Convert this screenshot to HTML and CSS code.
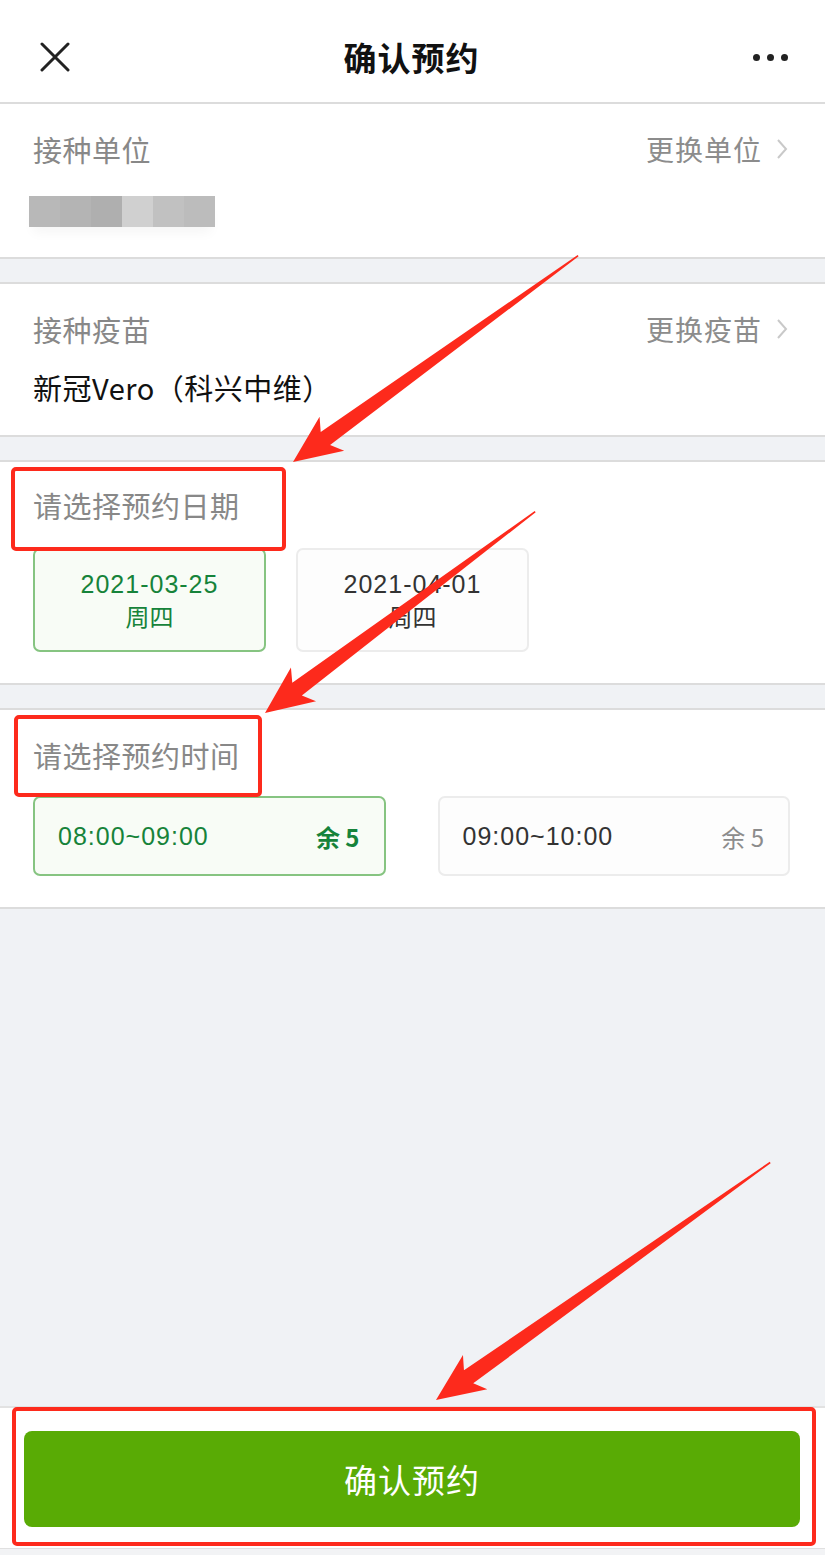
FILE: index.html
```html
<!DOCTYPE html>
<html lang="zh-CN">
<head>
<meta charset="utf-8">
<title>确认预约</title>
<link rel="stylesheet" href="styles.css">
</head>
<body>
<div class="page">
  <header class="nav">
    <svg class="nav-close" viewBox="0 0 30 30" width="30" height="30"><path d="M2 2L28 28M28 2L2 28" stroke="#222" stroke-width="3" stroke-linecap="round" fill="none"/></svg>
    <div class="nav-title">确认预约</div>
    <div class="nav-more"><span></span><span></span><span></span></div>
  </header>

  <section class="card card-unit">
    <div class="row-head">
      <span class="label">接种单位</span>
      <span class="link">更换单位<svg class="chev" viewBox="0 0 12 22" width="12" height="22"><path d="M2 2L10 11L2 20" stroke="#c9c9c9" stroke-width="2" fill="none"/></svg></span>
    </div>
    <div class="mosaic">
      <span class="m1"></span><span class="m2"></span><span class="m3"></span><span class="m4"></span><span class="m5"></span><span class="m6"></span>
    </div>
  </section>

  <div class="gap"></div>

  <section class="card card-vaccine">
    <div class="row-head">
      <span class="label">接种疫苗</span>
      <span class="link">更换疫苗<svg class="chev" viewBox="0 0 12 22" width="12" height="22"><path d="M2 2L10 11L2 20" stroke="#c9c9c9" stroke-width="2" fill="none"/></svg></span>
    </div>
    <div class="value">新冠Vero（科兴中维）</div>
  </section>

  <div class="gap"></div>

  <section class="card card-date">
    <div class="label">请选择预约日期</div>
    <div class="dates">
      <div class="date selected"><div class="num">2021-03-25</div><div class="wd">周四</div></div>
      <div class="date"><div class="num">2021-04-01</div><div class="wd">周四</div></div>
    </div>
  </section>

  <div class="gap"></div>

  <section class="card card-time">
    <div class="label">请选择预约时间</div>
    <div class="times">
      <div class="time selected"><span class="t">08:00~09:00</span><span class="rest">余 5</span></div>
      <div class="time"><span class="t">09:00~10:00</span><span class="rest">余 5</span></div>
    </div>
  </section>

  <div class="filler"></div>

  <footer class="bottom">
    <button class="confirm">确认预约</button>
  </footer>
  <div class="foot-strip"></div>

  <svg class="annot" viewBox="0 0 825 1555" width="825" height="1555">
    <g fill="none" stroke="#fd2a1c" stroke-width="4">
      <rect x="13" y="469" width="271" height="80" rx="3"/>
      <rect x="16" y="717" width="244" height="78" rx="3"/>
      <rect x="14" y="1409" width="800" height="135" rx="3"/>
    </g>
    <g fill="#fd2a1c">
      <g transform="translate(293 462) rotate(144.1)">
        <polygon points="-352,-0.8 -40,-8 -48,-21 0,0 -48,21 -40,8 -352,0.8"/>
      </g>
      <g transform="translate(265 713) rotate(143.3)">
        <polygon points="-337,-0.8 -40,-8 -48,-21 0,0 -48,21 -40,8 -337,0.8"/>
      </g>
      <g transform="translate(436 1400) rotate(144.6)">
        <polygon points="-410,-0.8 -40,-8 -48,-21 0,0 -48,21 -40,8 -410,0.8"/>
      </g>
    </g>
  </svg>
</div>
</body>
</html>
```

FILE: styles.css
```css
* { box-sizing: border-box; }
html, body { margin: 0; padding: 0; }
body {
  font-family: "Noto Sans CJK SC", "Noto Sans", sans-serif;
  background: #f0f2f5;
}
.page {
  position: relative;
  width: 825px;
  height: 1555px;
  display: flex;
  flex-direction: column;
  background: #f0f2f5;
  overflow: hidden;
}
.nav {
  height: 104px;
  background: #fff;
  border-bottom: 2px solid #dcdcdc;
  display: flex;
  align-items: center;
  justify-content: space-between;
  padding: 12px 37px 0 40px;
  flex-shrink: 0;
}
.nav-close { display: block; }
.nav-title {
  font-size: 33px;
  font-weight: 700;
  color: #111;
  margin-left: 0;
  letter-spacing: 1px;
}
.nav-more { display: flex; gap: 7px; }
.nav-more span {
  width: 7px; height: 7px; border-radius: 50%;
  background: #222;
}
.card {
  background: #fff;
  border-top: 2px solid #dcdcdc;
  border-bottom: 2px solid #dcdcdc;
  padding: 25px 35px 27px 33px;
  flex-shrink: 0;
}
.nav + .card { border-top: none; }
.card-unit { padding-top: 25px; padding-bottom: 28px; }
.card-vaccine { padding-top: 25px; padding-bottom: 28px; }
.gap { height: 23px; flex-shrink: 0; }
.row-head {
  display: flex;
  justify-content: space-between;
  align-items: center;
  height: 40px;
}
.label {
  font-size: 29px;
  line-height: 40px;
  color: #888;
  letter-spacing: 0.5px;
}
.link {
  font-size: 28px;
  color: #8c8c8c;
  display: flex;
  align-items: center;
  gap: 14px;
  letter-spacing: 1px;
}
.chev { margin-right: 2px; }
.mosaic {
  display: flex;
  margin: 27px 0 2px -4px;
  height: 31px;
  width: 186px;
  box-shadow: 0 10px 12px -4px rgba(0,0,0,0.04);
}
.mosaic span { flex: 1; }
.m1 { background: #b8b8b8; }
.m2 { background: #b4b4b4; }
.m3 { background: #afafaf; }
.m4 { background: #d0d0d0; }
.m5 { background: #c1c1c1; }
.m6 { background: #bcbcbc; }
.value {
  margin-top: 18px;
  font-size: 29px;
  line-height: 40px;
  color: #111;
  letter-spacing: 0.5px;
}
.card-date { padding-bottom: 31px; padding-top: 23px; }
.dates {
  display: flex;
  gap: 30px;
  margin-top: 23px;
}
.date {
  width: 233px;
  height: 104px;
  border: 2px solid #ececec;
  border-radius: 7px;
  background: #fdfdfd;
  display: flex;
  flex-direction: column;
  align-items: center;
  justify-content: center;
  color: #333;
}
.date .num {
  font-family: "Liberation Sans", "Noto Sans CJK SC", sans-serif;
  font-size: 25px;
  line-height: 32px;
  letter-spacing: 1px;
}
.date .wd {
  font-size: 24px;
  line-height: 32px;
}
.date.selected {
  border-color: #86c481;
  background: #f8fcf6;
  color: #16833a;
}
.card-time { padding-bottom: 31px; padding-top: 25px; }
.times {
  display: grid;
  grid-template-columns: 1fr 1fr;
  gap: 52px;
  margin-top: 21px;
}
.time {
  height: 80px;
  border: 2px solid #ececec;
  border-radius: 7px;
  background: #fdfdfd;
  display: flex;
  align-items: center;
  justify-content: space-between;
  padding: 0 24px 0 23px;
  color: #333;
}
.time .t {
  font-family: "Liberation Sans", "Noto Sans CJK SC", sans-serif;
  font-size: 25px;
  letter-spacing: 1px;
}
.time .rest {
  color: #8c8c8c;
  font-size: 24px;
  font-family: "Noto Sans CJK SC", sans-serif;
}
.time.selected {
  border-color: #86c481;
  background: #f8fcf6;
  color: #16833a;
}
.time.selected .rest { color: #16833a; font-weight: 700; }
.filler { flex: 1; }
.bottom {
  background: #fff;
  border-top: 2px solid #e2e2e2;
  padding: 23px 25px 21px 24px;
  flex-shrink: 0;
}
.confirm {
  display: block;
  width: 100%;
  height: 96px;
  border: none;
  border-radius: 8px;
  background: #59ab05;
  color: #fff;
  font-family: "Noto Sans CJK SC", "Noto Sans", sans-serif;
  font-size: 33px;
  letter-spacing: 1px;
}
.foot-strip {
  height: 7px;
  border-top: 1px solid #e0e0e0;
  background: #f2f3f5;
  flex-shrink: 0;
}
.annot {
  position: absolute;
  top: 0;
  left: 0;
  pointer-events: none;
}
```
